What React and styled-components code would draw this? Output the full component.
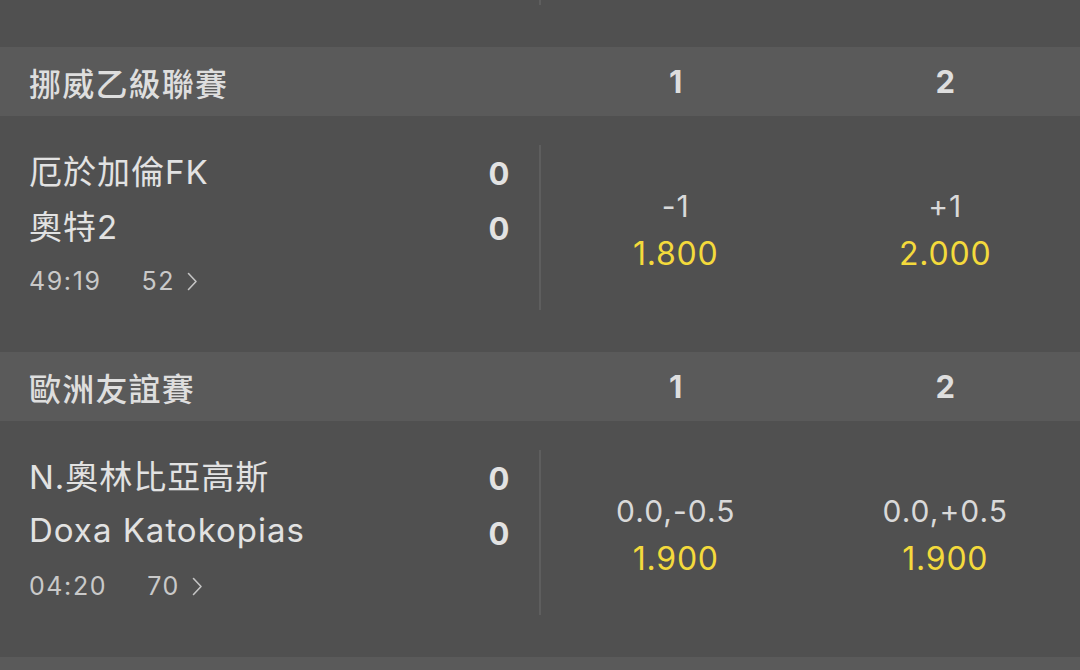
import React from 'react';
import styled, {createGlobalStyle} from 'styled-components';

const FONT = `Inter, "Noto Sans CJK TC", "Noto Sans", sans-serif`;

const GlobalStyle = createGlobalStyle`
    html, body {
        margin: 0;
        padding: 0;
        background: #505050;
    }
    body {
        font-family: ${FONT};
        -webkit-font-smoothing: antialiased;
    }
`;

const LEAGUES = [
    {
        name: '挪威乙級聯賽',
        matches: [
            {
                home: '厄於加倫FK',
                away: '奧特2',
                homeScore: 0,
                awayScore: 0,
                time: '49:19',
                markets: 52,
                odds: [
                    {line: '-1', price: '1.800'},
                    {line: '+1', price: '2.000'},
                ],
            },
        ],
    },
    {
        name: '歐洲友誼賽',
        matches: [
            {
                home: 'N.奧林比亞高斯',
                away: 'Doxa Katokopias',
                homeScore: 0,
                awayScore: 0,
                time: '04:20',
                markets: 70,
                odds: [
                    {line: '0.0,-0.5', price: '1.900'},
                    {line: '0.0,+0.5', price: '1.900'},
                ],
            },
        ],
    },
];

const Viewport = styled.div`
    height: 670px;
    overflow: hidden;
    background: #505050;
`;

// bottom of the match above, scrolled mostly out of view
const Tail = styled.div`
    display: grid;
    grid-template-columns: 539px 2px 1fr;
    height: 47px;
    align-items: start;
`;

const TailDivider = styled.div`
    grid-column: 2;
    height: 5px;
    background: #5e5e5e;
`;

const LeagueHeader = styled.div`
    display: grid;
    grid-template-columns: 541px 1fr 1fr;
    align-items: center;
    height: 69px;
    background: #5a5a5a;
    color: #dedede;
`;

const LeagueName = styled.div`
    padding-left: 29px;
    font-size: 32px;
    font-weight: 500;
    letter-spacing: 1.2px;
`;

const ColumnLabel = styled.div`
    text-align: center;
    font-size: 31px;
    font-weight: 700;
`;

const MatchRow = styled.div`
    display: grid;
    grid-template-columns: 539px 2px 1fr 1fr;
    grid-template-rows: 165px;
    padding: 29px 0 42px;
    background: #505050;
`;

const Teams = styled.div`
    margin-top: -3px;
    padding: 0 29px;
    display: flex;
    flex-direction: column;
`;

const TeamLine = styled.div`
    display: flex;
    justify-content: space-between;
    align-items: center;
    height: 55px;
    color: #e2e2e2;
    font-size: 33px;
    letter-spacing: 1px;
`;

const Score = styled.span`
    padding-top: 8px;
    font-weight: 700;
    font-size: 31px;
    width: 22px;
    text-align: center;
    letter-spacing: 0;
`;

const Meta = styled.div`
    display: flex;
    align-items: center;
    height: 58px;
    color: #c9c9c9;
    font-size: 25px;
    letter-spacing: 1.6px;
`;

const Markets = styled.span`
    display: flex;
    align-items: center;
    margin-left: 40px;
    gap: 12px;
`;

const Divider = styled.div`
    background: #5e5e5e;
`;

const OddsCell = styled.div`
    display: flex;
    flex-direction: column;
    justify-content: center;
    align-items: center;
    padding-top: 4px;
`;

const Line = styled.div`
    height: 47px;
    line-height: 47px;
    color: #d9d9d9;
    font-size: 30px;
    letter-spacing: 1px;
`;

const Price = styled.div`
    height: 47px;
    line-height: 47px;
    color: #f4da3c;
    font-size: 32px;
    letter-spacing: 0.8px;
`;

const Chevron = () => (
    <svg width="11" height="19" viewBox="0 0 11 19" fill="none">
        <polyline points="1.5,1.5 9,9.5 1.5,17.5" stroke="#c4c4c4" strokeWidth="1.6" strokeLinecap="round" strokeLinejoin="round" />
    </svg>
);

const Match = ({match}) => (
    <MatchRow>
        <Teams>
            <TeamLine>
                <span>{match.home}</span>
                <Score>{match.homeScore}</Score>
            </TeamLine>
            <TeamLine>
                <span>{match.away}</span>
                <Score>{match.awayScore}</Score>
            </TeamLine>
            <Meta>
                {match.time}
                <Markets>
                    {match.markets}
                    <Chevron />
                </Markets>
            </Meta>
        </Teams>
        <Divider />
        {match.odds.map((o, i) => (
            <OddsCell key={i}>
                <Line>{o.line}</Line>
                <Price>{o.price}</Price>
            </OddsCell>
        ))}
    </MatchRow>
);

const Header = ({name}) => (
    <LeagueHeader>
        <LeagueName>{name}</LeagueName>
        <ColumnLabel>1</ColumnLabel>
        <ColumnLabel>2</ColumnLabel>
    </LeagueHeader>
);

export default function App() {
    return (
        <Viewport>
            <GlobalStyle />
            <Tail>
                <TailDivider />
            </Tail>
            {LEAGUES.map((league) => (
                <React.Fragment key={league.name}>
                    <Header name={league.name} />
                    {league.matches.map((m) => (
                        <Match key={m.home} match={m} />
                    ))}
                </React.Fragment>
            ))}
            <LeagueHeader />
        </Viewport>
    );
}
